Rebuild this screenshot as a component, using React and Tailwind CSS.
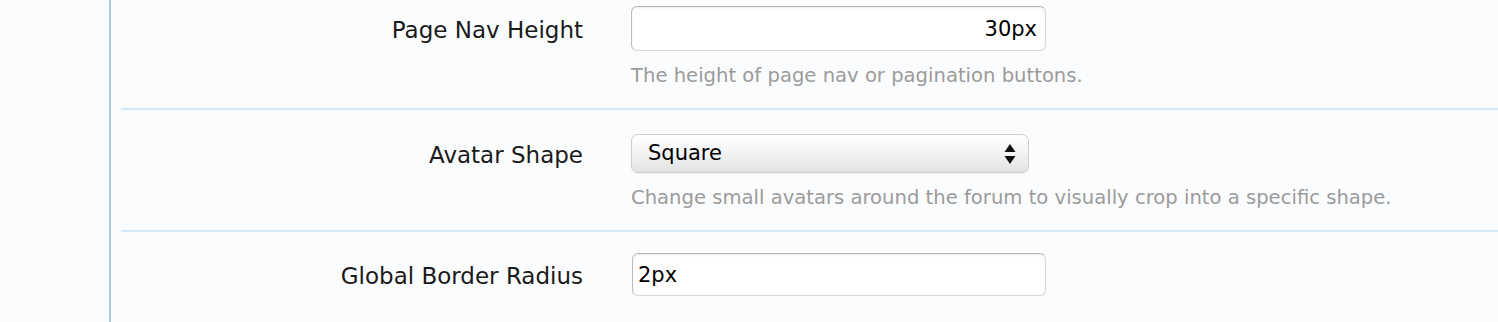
import React from 'react';

const labelFont = { fontFamily: '"DejaVu Sans", Verdana, sans-serif' };

const SelectArrows = () => (
  <svg width="12" height="22" viewBox="0 0 12 22" className="shrink-0">
    <path d="M6 1 L11.5 9 L0.5 9 Z" fill="#111" />
    <path d="M6 21 L11.5 13 L0.5 13 Z" fill="#111" />
  </svg>
);

const Row = ({ label, children, hint, className, labelHeight }) => (
  <div className={`flex border-b-2 border-[#d6e9f8] ${className}`}>
    <div
      className={`w-[462px] shrink-0 pt-[2px] text-right text-[23px] text-[#1a1a1a] ${labelHeight}`}
      style={labelFont}
    >
      {label}
    </div>
    <div className="ml-[48px] flex flex-col">
      {children}
      {hint && (
        <p className="text-[19.6px] leading-[22px] text-[#9b9b9b] mt-[14px]" style={labelFont}>
          {hint}
        </p>
      )}
    </div>
  </div>
);

export default function App() {
  return (
    <div className="h-[322px] overflow-hidden bg-[#fbfcfe] flex">
      <div className="w-[109px] shrink-0" />
      <div className="w-[2px] shrink-0 bg-[#a9cbe6]" />
      <div className="flex-1 pl-[10px]">
        {/* Page Nav Height */}
        <Row
          label="Page Nav Height"
          labelHeight="leading-[45px]"
          className="h-[110px] pt-[6px]"
          hint="The height of page nav or pagination buttons."
        >
          <div
            className="w-[415px] h-[45px] rounded-[6px] bg-white border border-[#d6d6d6] border-t-[#b4b4b4] border-l-[#bcbcbc] shadow-[inset_0_1px_2px_rgba(0,0,0,0.08)] flex items-center justify-end pt-[3px] pr-[8px] text-[21px] text-black"
            style={labelFont}
          >
            30px
          </div>
        </Row>

        {/* Avatar Shape */}
        <Row
          label="Avatar Shape"
          labelHeight="leading-[39px]"
          className="h-[122px] pt-[24px]"
          hint="Change small avatars around the forum to visually crop into a specific shape."
        >
          <div className="w-[398px] h-[39px] rounded-[7px] border border-[#cfcfcf] bg-gradient-to-b from-[#ffffff] via-[#f3f3f3] to-[#e2e2e2] shadow-[0_1px_1px_rgba(0,0,0,0.06)] flex items-center justify-between pl-[16px] pr-[12px]">
            <span className="text-[21px] text-black pt-[1px]" style={labelFont}>
              Square
            </span>
            <SelectArrows />
          </div>
        </Row>

        {/* Global Border Radius */}
        <div className="flex pt-[21px]">
          <div
            className="w-[462px] shrink-0 pt-[2px] text-right text-[23px] leading-[43px] text-[#1a1a1a]"
            style={labelFont}
          >
            Global Border Radius
          </div>
          <div className="ml-[49px]">
            <div
              className="w-[414px] h-[43px] rounded-[6px] bg-white border border-[#d6d6d6] border-t-[#b4b4b4] border-l-[#bcbcbc] shadow-[inset_0_1px_2px_rgba(0,0,0,0.08)] flex items-center pt-[2px] pl-[5px] text-[21px] text-black"
              style={labelFont}
            >
              2px
            </div>
          </div>
        </div>
      </div>
    </div>
  );
}
